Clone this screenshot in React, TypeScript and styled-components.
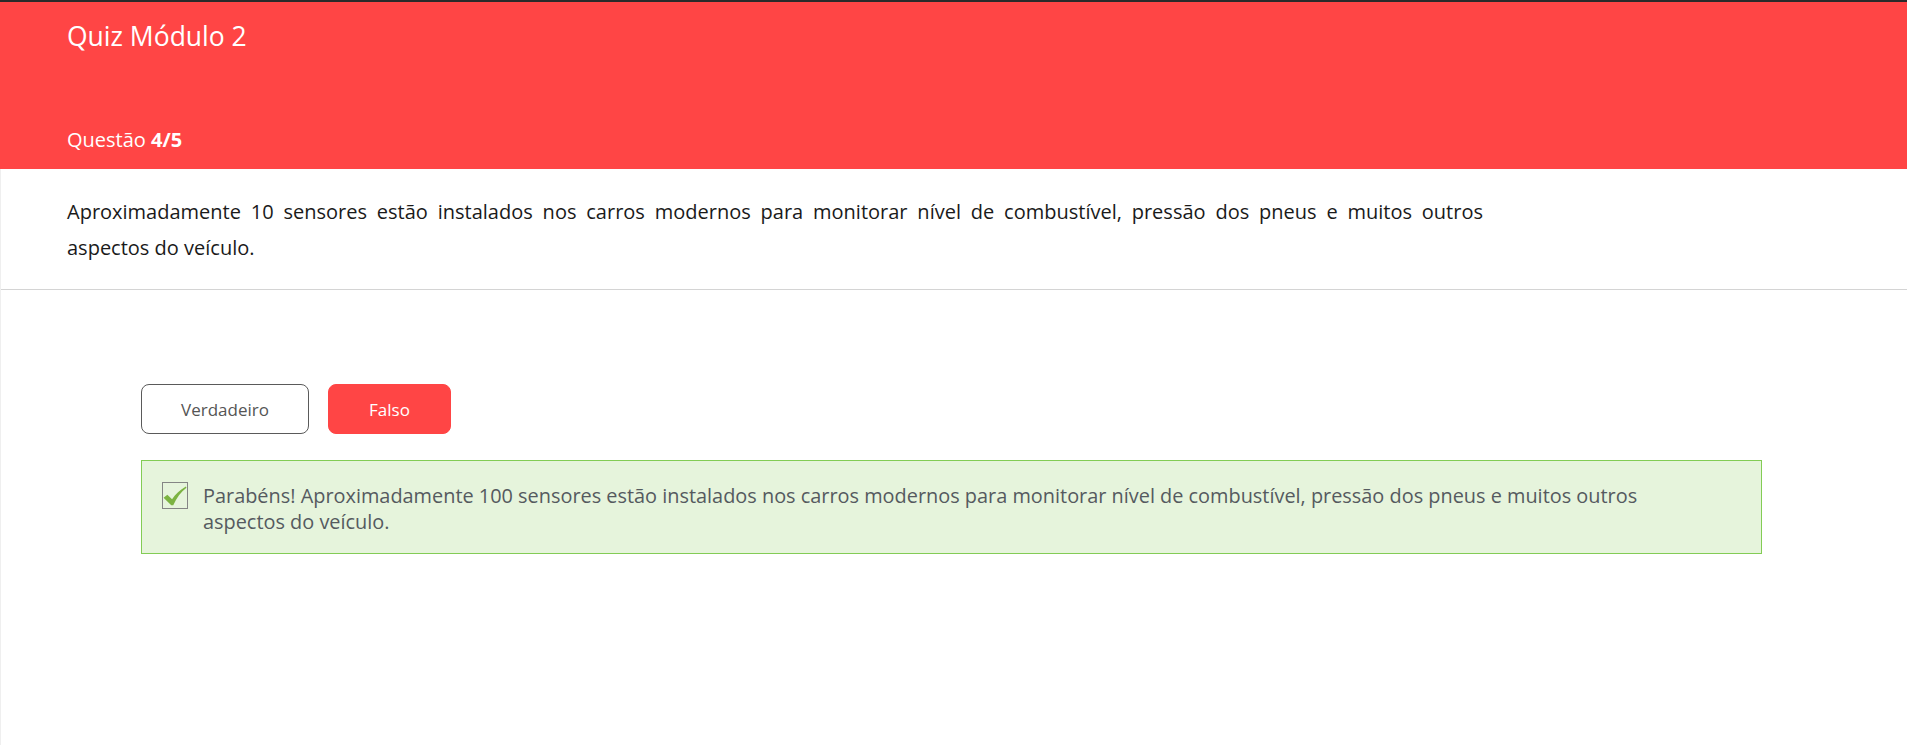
import React from "react";
import styled, { createGlobalStyle } from "styled-components";

const Global = createGlobalStyle`
  html, body { margin: 0; padding: 0; background: #ffffff; }
  body { font-family: "Open Sans", "Noto Sans", sans-serif; }
  * { box-sizing: border-box; }
`;

const Page = styled.div`
  min-height: 745px;
  display: flex;
  flex-direction: column;
  background: #ffffff;
`;

const Header = styled.header`
  background: #ff4545;
  border-top: 2px solid #2a2a2a;
  height: 169px;
  padding: 16px 67px 16px;
  display: flex;
  flex-direction: column;
  justify-content: space-between;
  color: #ffffff;
`;

const Title = styled.h1`
  margin: 0;
  font-size: 26.5px;
  font-weight: 400;
  line-height: 36px;
`;

const Counter = styled.div`
  font-size: 20px;
  line-height: 26px;
  font-weight: 400;
  b { font-weight: 700; }
`;

const Content = styled.main`
  flex: 1;
  border-left: 1px solid #efefef;
  display: flex;
  flex-direction: column;
`;

const QuestionBox = styled.section`
  padding: 25px 66px 23px;
  border-bottom: 1px solid #d4d4d4;
`;

const QuestionText = styled.p`
  margin: 0;
  width: 1416px;
  font-size: 20px;
  line-height: 36px;
  color: #1a1a1a;
  text-align: justify;
`;

const JustifiedLine = styled.span`
  display: block;
  text-align: justify;
  text-align-last: justify;
`;

const Answers = styled.section`
  padding: 94px 0 0 140px;
  display: flex;
  flex-direction: column;
  gap: 26px;
`;

const ButtonRow = styled.div`
  display: flex;
  gap: 19px;
`;

const Choice = styled.button<{ $selected?: boolean }>`
  height: 50px;
  width: ${(p) => (p.$selected ? "123px" : "168px")};
  border-radius: 8px;
  font-family: "Open Sans", "Noto Sans", sans-serif;
  font-size: 17px;
  cursor: pointer;
  border: 1px solid ${(p) => (p.$selected ? "#ff4545" : "#5a5a5a")};
  background: ${(p) => (p.$selected ? "#ff4545" : "#ffffff")};
  color: ${(p) => (p.$selected ? "#ffffff" : "#555555")};
`;

const Feedback = styled.div`
  width: 1621px;
  background: #e6f4dc;
  border: 1px solid #83cc55;
  padding: 22px 20px 18px;
  display: flex;
  align-items: flex-start;
  gap: 15px;
`;

const CheckBox = styled.span`
  flex: none;
  width: 26px;
  height: 27px;
  margin-top: -1px;
  border: 1.5px solid #858585;
  display: flex;
  align-items: center;
  justify-content: center;
`;

const FeedbackText = styled.p`
  margin: 0;
  font-size: 19.9px;
  line-height: 26px;
  color: #555a5f;
`;

export default function App() {
  return (
    <Page>
      <Global />
      <Header>
        <Title>Quiz Módulo 2</Title>
        <Counter>
          Questão <b>4/5</b>
        </Counter>
      </Header>
      <Content>
        <QuestionBox>
          <QuestionText>
            <JustifiedLine>
              Aproximadamente 10 sensores estão instalados nos carros modernos para monitorar nível de combustível, pressão dos pneus e muitos outros
            </JustifiedLine>
            aspectos do veículo.
          </QuestionText>
        </QuestionBox>
        <Answers>
          <ButtonRow>
            <Choice>Verdadeiro</Choice>
            <Choice $selected>Falso</Choice>
          </ButtonRow>
          <Feedback>
            <CheckBox>
              <svg width="24" height="22" viewBox="0 0 22 20">
                <path
                  d="M0.5 11.5 L4 8.8 L8.3 13 C11.5 8.2 15.5 4.3 21 1.3 L21.5 2.5 C16.3 6.5 12.5 11.8 9.4 18.5 L7.6 18.5 Z"
                  fill="#7cb342"
                />
              </svg>
            </CheckBox>
            <FeedbackText>
              Parabéns! Aproximadamente 100 sensores estão instalados nos carros modernos para monitorar nível de combustível, pressão dos pneus e muitos outros
              <br />
              aspectos do veículo.
            </FeedbackText>
          </Feedback>
        </Answers>
      </Content>
    </Page>
  );
}
